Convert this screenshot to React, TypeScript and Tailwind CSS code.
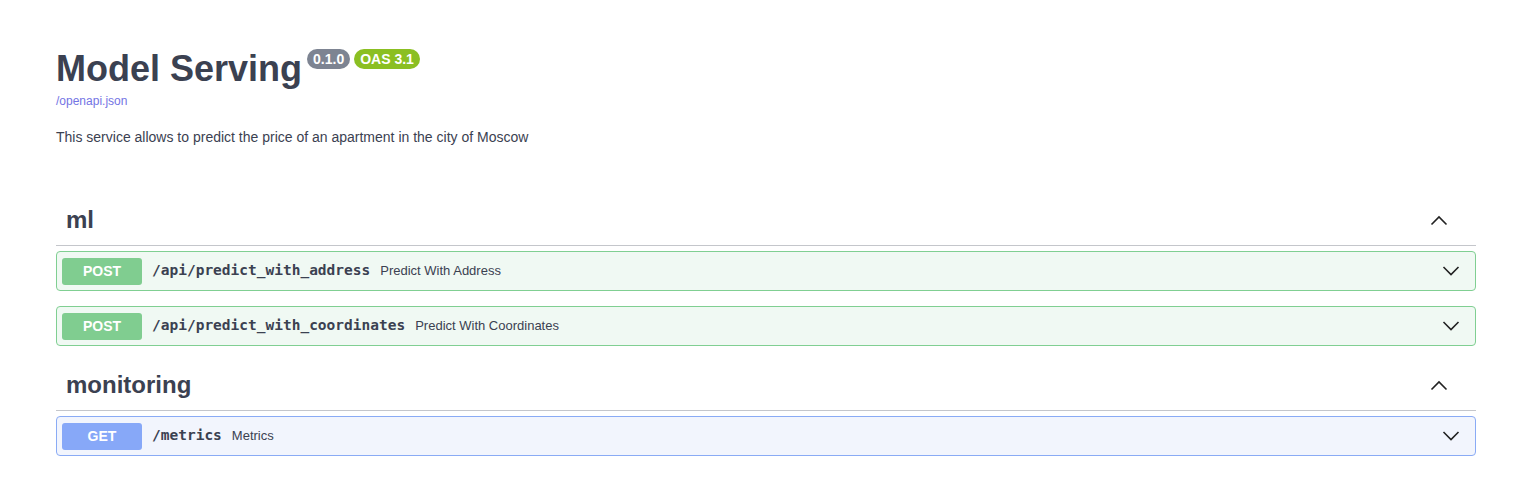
import { ReactNode } from 'react';

type Method = 'POST' | 'GET';

interface Operation {
    method: Method;
    path: string;
    summary: string;
}

const sections: { name: string; ops: Operation[] }[] = [
    {
        name: 'ml',
        ops: [
            { method: 'POST', path: '/api/predict_with_address', summary: 'Predict With Address' },
            { method: 'POST', path: '/api/predict_with_coordinates', summary: 'Predict With Coordinates' },
        ],
    },
    {
        name: 'monitoring',
        ops: [{ method: 'GET', path: '/metrics', summary: 'Metrics' }],
    },
];

const methodStyles: Record<Method, { row: string; badge: string }> = {
    POST: {
        row: 'border-[#80cf92] bg-[#f0f9f3]',
        badge: 'bg-[#80cd90]',
    },
    GET: {
        row: 'border-[#8aabf5] bg-[#f2f5fd]',
        badge: 'bg-[#87a8f8]',
    },
};

function Chevron({ up = false }: { up?: boolean }) {
    return (
        <svg width="20" height="20" viewBox="0 0 20 20" className="text-[#222]">
            {up ? (
                <path d="M2.5 14.5 L10 7 L17.5 14.5" fill="none" stroke="currentColor" strokeWidth="1.6" />
            ) : (
                <path d="M2.5 6 L10 13.5 L17.5 6" fill="none" stroke="currentColor" strokeWidth="1.6" />
            )}
        </svg>
    );
}

function Badge({ children, color }: { children: ReactNode; color: string }) {
    return (
        <span
            className={`inline-flex h-5 items-center rounded-full px-[6px] text-[14px] font-bold leading-none text-white ${color}`}
        >
            {children}
        </span>
    );
}

function OperationRow({ op }: { op: Operation }) {
    const s = methodStyles[op.method];
    return (
        <div className={`mb-[15px] flex h-10 items-center rounded border px-[5px] ${s.row}`}>
            <span
                className={`flex h-[27px] w-20 items-center justify-center rounded-[3px] text-[14px] font-bold text-white ${s.badge}`}
            >
                {op.method}
            </span>
            <span className="px-[10px] font-['DejaVu_Sans_Mono',monospace] text-[14.5px] font-bold text-[#3b4151]">
                {op.path}
            </span>
            <span className="text-[13px] text-[#3b4151]">{op.summary}</span>
            <span className="ml-auto mr-[9px] flex">
                <Chevron />
            </span>
        </div>
    );
}

export default function App() {
    return (
        <div className="min-h-screen bg-white font-['Liberation_Sans',Arial,sans-serif] text-[#3b4151]">
            <div className="ml-[36px] max-w-[1460px] px-5">
                {/* Info */}
                <div className="pt-[48px]">
                    <div className="flex items-start">
                        <h2 className="text-[36px] font-bold leading-[41px] text-[#3b4151]">
                            Model Serving
                        </h2>
                        <div className="ml-[5px] mt-[1px] flex gap-[4px]">
                            <Badge color="bg-[#7d8492]">0.1.0</Badge>
                            <Badge color="bg-[#8bbf22]">OAS 3.1</Badge>
                        </div>
                    </div>
                    <a href="#" className="mt-[5px] block text-[12px] leading-[14px] text-[#7474e4]">
                        /openapi.json
                    </a>
                    <p className="mt-[20px] text-[14px] leading-[18px] text-[#3b4151]">
                        This service allows to predict the price of an apartment in the city of Moscow
                    </p>
                </div>

                {/* Tags */}
                <div className="mt-[50px]">
                    {sections.map(section => (
                        <div key={section.name}>
                            <div className="mb-[5px] flex h-[50px] items-center border-b border-[#c4c6cb] pb-[2px] pl-[10px] pr-[27px]">
                                <h3 className="text-[24px] font-bold text-[#3b4151]">{section.name}</h3>
                                <span className="ml-auto flex">
                                    <Chevron up />
                                </span>
                            </div>
                            {section.ops.map(op => (
                                <OperationRow key={op.path} op={op} />
                            ))}
                        </div>
                    ))}
                </div>
            </div>
        </div>
    );
}
